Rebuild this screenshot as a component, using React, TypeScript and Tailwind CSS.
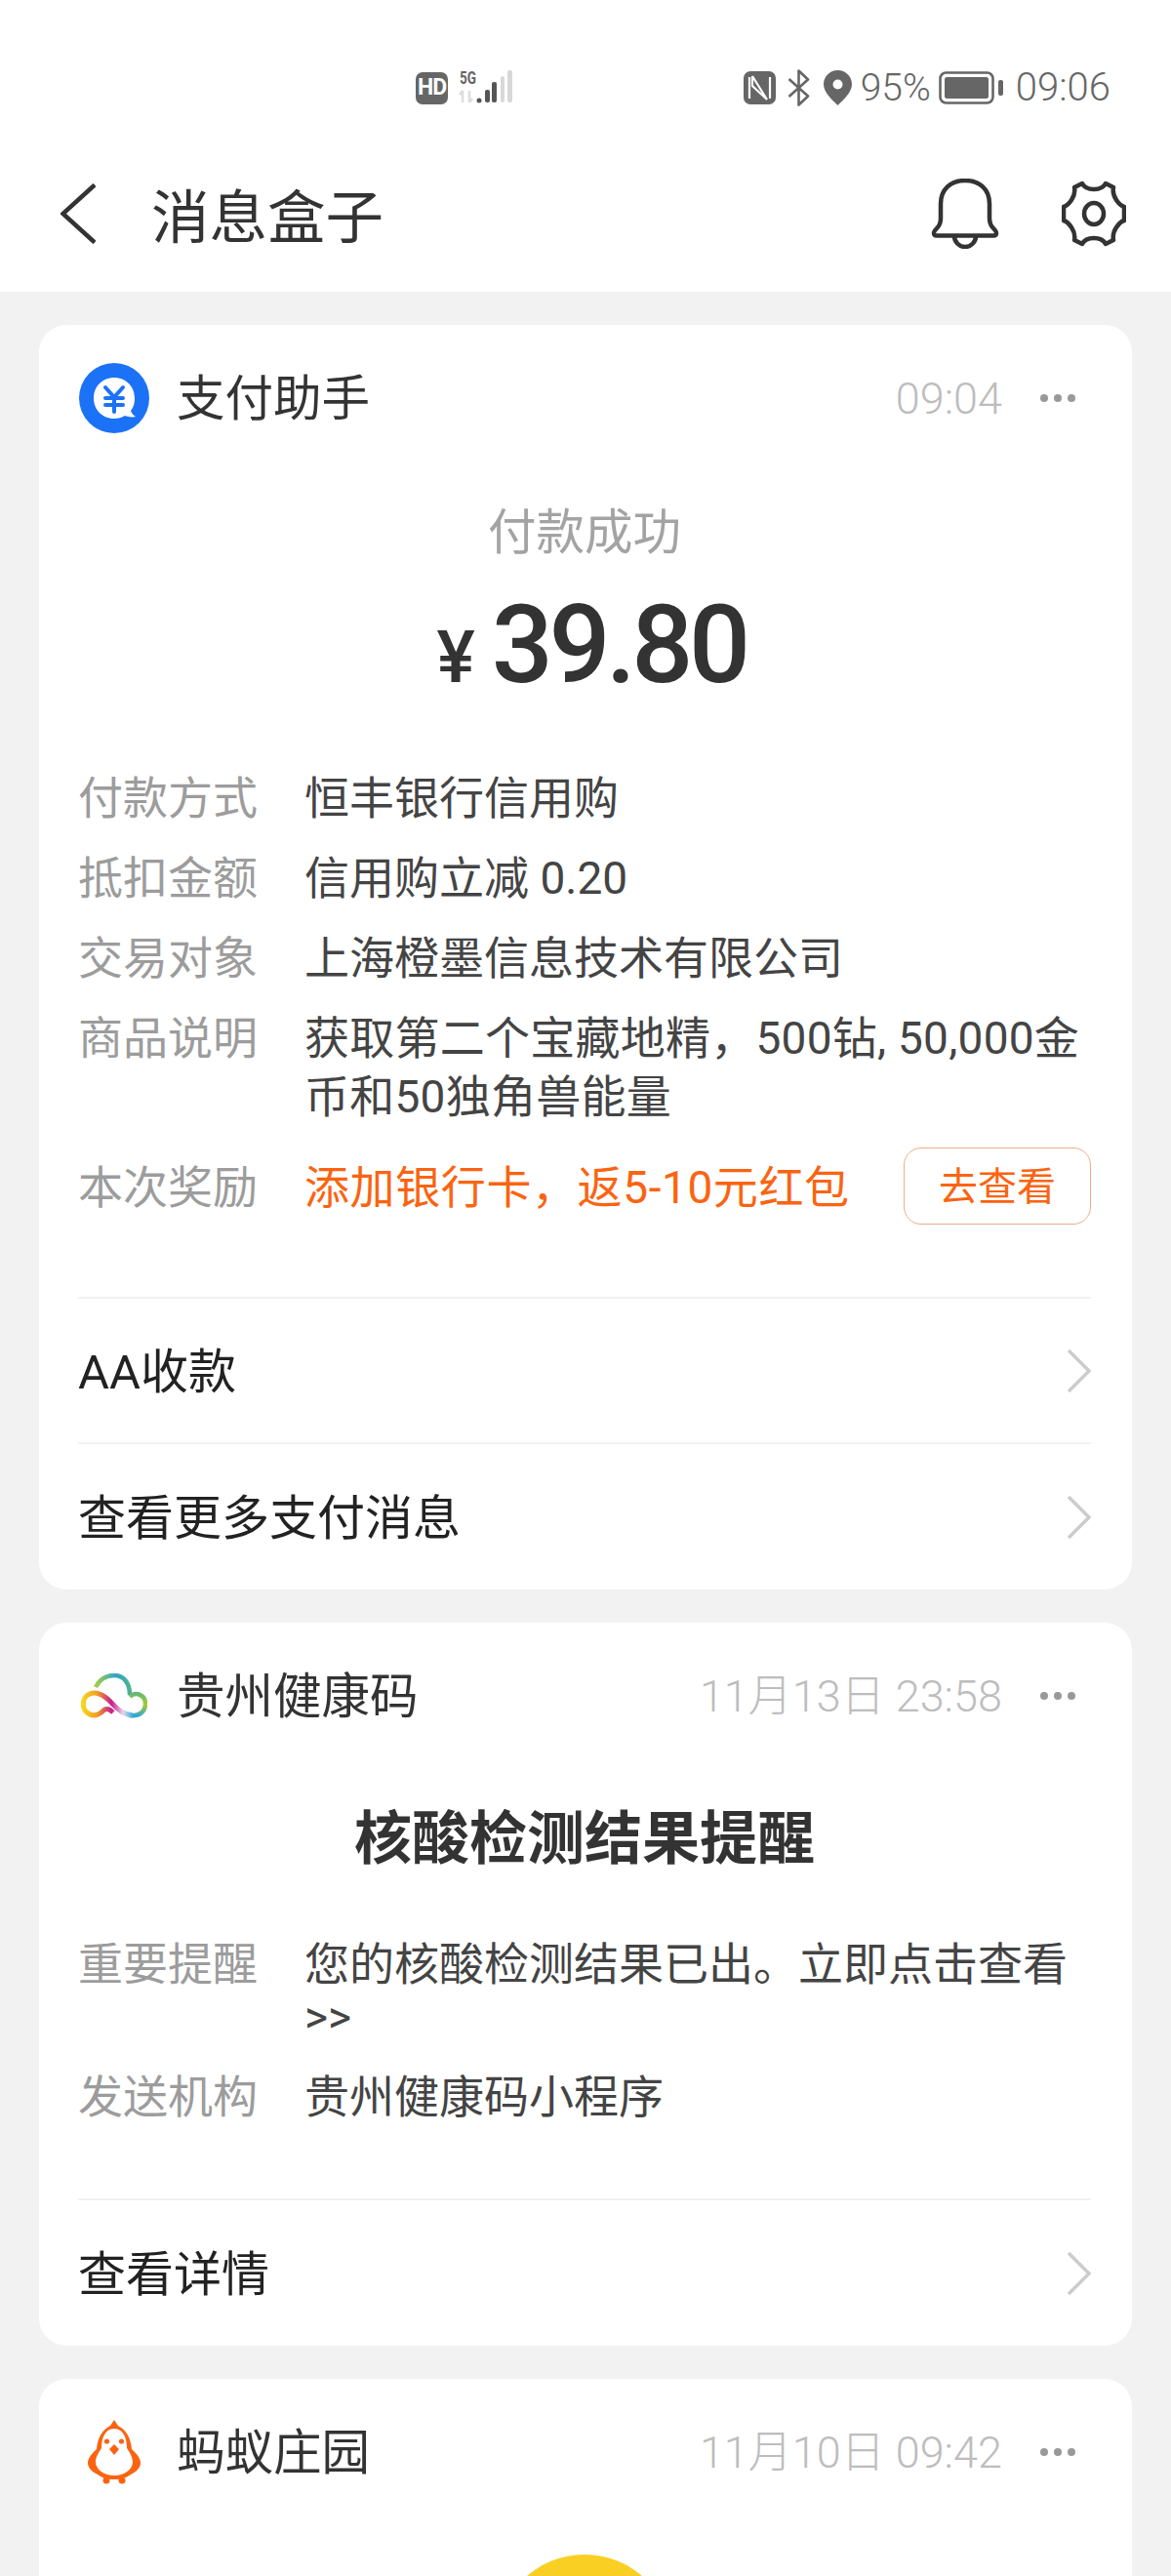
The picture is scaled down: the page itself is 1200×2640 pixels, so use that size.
const FONT = "font-['Roboto','Noto_Sans_CJK_SC',sans-serif]";

function StatusIcons() {
  return (
    <div className="h-[180px] flex items-center pl-[426px] pr-[62px] text-[#666]">
      {/* HD badge */}
      <div className="w-[33px] h-[33px] rounded-[7px] bg-[#666] text-white text-[23px] font-bold flex items-center justify-center tracking-[-1px] font-['Roboto',sans-serif]">
        HD
      </div>
      {/* 5G + signal */}
      <svg width="55" height="36" viewBox="0 0 55 36" className="ml-[11px] overflow-visible">
        <text x="1" y="14" fontSize="18" fontWeight="700" fill="#666" fontFamily="Roboto, sans-serif" textLength="17" lengthAdjust="spacingAndGlyphs">5G</text>
        <path d="M4 33V21M4 21l-3 4M11 21v12M11 33l3-4" stroke="#ddd" strokeWidth="2.500" fill="none" />
        <circle cx="21" cy="31" r="2.500" fill="#555" />
        <rect x="27" y="20" width="5" height="13" rx="2" fill="#555" />
        <rect x="34" y="12" width="5" height="21" rx="2" fill="#555" />
        <rect x="43" y="6" width="4" height="27" rx="2" fill="#d8d8d8" />
        <rect x="50" y="0" width="5" height="33" rx="2" fill="#d8d8d8" />
      </svg>
      <div className="ml-auto flex items-center">
        {/* NFC */}
        <svg width="33" height="34" viewBox="0 0 33 34">
          <rect width="33" height="34" rx="7" fill="#666" />
          <path d="M6 6v22M27 6v22M9 5l15 24M9 5v10l15 14" stroke="#fff" strokeWidth="2.200" fill="none" />
        </svg>
        {/* bluetooth */}
        <svg width="23" height="38" viewBox="0 0 23 38" className="ml-[12px]">
          <path d="M1.500 10 L21 27.500 L11.500 36.500 V1.500 L21 10.500 L1.500 28" stroke="#666" strokeWidth="2.600" fill="none" strokeLinejoin="round" />
        </svg>
        {/* location */}
        <svg width="29" height="36" viewBox="0 0 29 36" className="ml-[14px]">
          <path fillRule="evenodd" d="M14.500 0C6.500 0 0 6.400 0 14.300 0 23 9 30.500 14.500 36 20 30.500 29 23 29 14.300 29 6.400 22.500 0 14.500 0Zm0 9.500a5 5 0 1 1 0 10 5 5 0 0 1 0-10Z" fill="#666" />
        </svg>
        <span className="ml-[9px] text-[39px] leading-none font-light font-['Roboto',sans-serif]">95%</span>
        {/* battery */}
        <svg width="66" height="34" viewBox="0 0 66 34" className="ml-[8px]">
          <rect x="1.500" y="1.500" width="54" height="31" rx="6" fill="none" stroke="#666" strokeWidth="2.600" />
          <rect x="6" y="6" width="45" height="22" rx="2.500" fill="#666" />
          <rect x="61" y="9" width="5" height="16" rx="2" fill="#666" />
        </svg>
        <span className="ml-[13px] text-[40px] leading-none font-light font-['Roboto',sans-serif]">09:06</span>
      </div>
    </div>
  );
}

function NavBar() {
  return (
    <div className="h-[119px] pb-[41px] flex items-center text-[#333]">
      <svg width="36" height="62" viewBox="0 0 36 62" className="ml-[62px]">
        <path d="M35 1.500 L2.500 31 L35 60.500" stroke="#333" strokeWidth="4.500" fill="none" />
      </svg>
      <span className="ml-[57px] mt-[10px] text-[59.5px] leading-[78px]">消息盒子</span>
      <div className="ml-auto flex items-center pr-[46px]">
        <svg width="72" height="72" viewBox="0 0 72 72">
          <path d="M4 56c0-2 1-3 3-5 3-3 4-6 4-10V26C11 11 21 2 36 2s25 9 25 24v15c0 4 1 7 4 10 2 2 3 3 3 5 0 1.500-1 2.500-3 2.500H7c-2 0-3-1-3-2.500Z" fill="none" stroke="#333" strokeWidth="4.500" strokeLinejoin="round" />
          <path d="M25 59c0 6 5 11 11 11s11-5 11-11" fill="none" stroke="#333" strokeWidth="4.500" />
        </svg>
        <svg width="66" height="68" viewBox="0 0 66 68" className="ml-[63px]">
          <path d="M21 3c2 4 7 6 12 6s10-2 12-6l8 4c-1 5 1 10 3 13 2 3 5 6 8 7v14c-3 1-6 4-8 7s-4 8-3 13l-8 4c-2-4-7-6-12-6s-10 2-12 6l-8-4c1-5-1-10-3-13s-5-6-8-7V27c3-1 6-4 8-7s4-8 3-13Z" fill="none" stroke="#333" strokeWidth="4.500" strokeLinejoin="round" />
          <ellipse cx="33" cy="34" rx="10" ry="11" fill="none" stroke="#333" strokeWidth="4.500" />
        </svg>
      </div>
    </div>
  );
}

function PayIcon() {
  return (
    <svg width="72" height="72" viewBox="0 0 72 72">
      <circle cx="36" cy="36" r="36" fill="#1c72f6" />
      <path d="M36 15c12 0 21 9 21 21 0 5-1 9-4 13 1 3 3 5 5 6-4 1-8 0-11-1-3 2-7 3-11 3-12 0-21-9-21-21s9-21 21-21Z" fill="#fff" />
      <path d="M27 25l9 10 9-10M27 36h18M27 43h18M36 35v15" stroke="#1c72f6" strokeWidth="4" fill="none" strokeLinecap="round" />
    </svg>
  );
}

function CloudIcon() {
  return (
    <svg width="68" height="46" viewBox="0 0 68 46">
      <defs>
        <linearGradient id="cloudTop" gradientUnits="userSpaceOnUse" x1="15" y1="0" x2="52" y2="0">
          <stop offset="0" stopColor="#a6cf3f" />
          <stop offset="0.55" stopColor="#2fa6c9" />
          <stop offset="1" stopColor="#4fb38a" />
        </linearGradient>
        <linearGradient id="cloudLobe" gradientUnits="userSpaceOnUse" x1="0" y1="18" x2="0" y2="44">
          <stop offset="0" stopColor="#58b583" />
          <stop offset="0.55" stopColor="#a9cc2c" />
          <stop offset="1" stopColor="#2aa7dc" />
        </linearGradient>
        <linearGradient id="cloudBand" gradientUnits="userSpaceOnUse" x1="0" y1="0" x2="54" y2="0">
          <stop offset="0" stopColor="#f5dc1e" />
          <stop offset="0.3" stopColor="#f2a01f" />
          <stop offset="0.58" stopColor="#c91d8c" />
          <stop offset="0.8" stopColor="#e6d9ea" />
          <stop offset="1" stopColor="#2aa7dc" />
        </linearGradient>
      </defs>
      <path d="M15 14C20 4 28 2 34 2 44 2 50 10 50 22" fill="none" stroke="url(#cloudTop)" strokeWidth="4.500" />
      <path d="M50 24C56 18 66 22 66 31 66 39 60 44 50 43" fill="none" stroke="url(#cloudLobe)" strokeWidth="4.500" />
      <path d="M53 43C40 42 34 32 27 26 20 20 12 18 7 22 1 26 1 36 6 40 12 45 18 43 23 38 26 35 30 37 33 40" fill="none" stroke="url(#cloudBand)" strokeWidth="5" />
    </svg>
  );
}

function ChickIcon() {
  return (
    <svg width="60" height="66" viewBox="0 0 60 66">
      <path d="M30 0l4 6c8 4 13 12 14 24 5 5 9 9 9 14 0 5-4 9-10 12-4 3-9 5-17 5s-13-2-17-5C7 53 3 49 3 44c0-5 4-9 9-14 1-12 6-20 14-24Z" fill="#fa6411" />
      <path d="M30 9c9 0 13 9 13 20 3 5 6 9 6 14 0 8-9 14-19 14s-19-6-19-14c0-5 3-9 6-14C17 18 21 9 30 9Z" fill="#fff" />
      <circle cx="22.500" cy="22" r="2.600" fill="#fa6411" />
      <circle cx="37.500" cy="22" r="2.600" fill="#fa6411" />
      <path d="M30 25l5 5-5 6-5-6Z" fill="#fa6411" />
      <circle cx="22" cy="62" r="3.500" fill="#fa6411" />
      <circle cx="38" cy="62" r="3.500" fill="#fa6411" />
    </svg>
  );
}

function CardHeader({ icon, name, time }: { icon: React.ReactNode; name: string; time: string }) {
  return (
    <div className="h-[72px] flex items-center">
      <div className="ml-[1px] w-[72px] h-[72px] flex items-center justify-center shrink-0">{icon}</div>
      <span className="ml-[28px] mt-[2px] text-[49.5px] leading-[72px] text-[#333]">{name}</span>
      <span className="ml-auto mt-[2px] text-[45px] leading-[72px] font-light text-[#bdbdbd]">{time}</span>
      <div className="ml-[39px] mr-[16px] flex gap-[6px]">
        <span className="w-[8px] h-[8px] rounded-full bg-[#999]" />
        <span className="w-[8px] h-[8px] rounded-full bg-[#999]" />
        <span className="w-[8px] h-[8px] rounded-full bg-[#999]" />
      </div>
    </div>
  );
}

function InfoRow({ label, children, tight }: { label: string; children: React.ReactNode; tight?: boolean }) {
  return (
    <div className={tight ? "flex text-[46px] leading-[54px]" : "flex text-[46px] leading-[60px]"}>
      <span className="w-[232px] shrink-0 text-[#9c9c9c]">{label}</span>
      <span className="flex-1 text-[#444]">{children}</span>
    </div>
  );
}

function LinkRow({ text, tall }: { text: string; tall?: boolean }) {
  return (
    <div className={tall ? "h-[151px] flex items-center justify-between border-t-2 border-[#f2f2f2]" : "h-[149px] flex items-center justify-between border-t-2 border-[#f2f2f2]"}>
      <span className="text-[49px] mt-[4px] text-[#222]">{text}</span>
      <svg width="25" height="46" viewBox="0 0 25 46">
        <path d="M2 2 L23 23 L2 44" stroke="#ccc" strokeWidth="3.500" fill="none" />
      </svg>
    </div>
  );
}

export default function App() {
  return (
    <div className={`w-[1200px] h-[2640px] overflow-hidden bg-[#f2f2f2] ${FONT}`}>
      <div className="bg-white">
        <StatusIcons />
        <NavBar />
      </div>

      <div className="px-[40px] pt-[34px] flex flex-col gap-[34px]">
        {/* 支付助手 */}
        <div className="bg-white rounded-[28px] pl-[40px] pr-[42px] pt-[39px]">
          <CardHeader icon={<PayIcon />} name="支付助手" time="09:04" />
          <div className="mt-[72px] text-center text-[49.5px] leading-[60px] text-[#a3a3a3]">付款成功</div>
          <div className="mt-[30px] ml-[14px] h-[110px] flex items-center justify-center text-[#333]">
            <span className="text-[74px] font-medium mr-[17px] mt-[24px]">¥</span>
            <span className="text-[111px] leading-[110px] font-medium tracking-[-4.5px]">39.80</span>
          </div>
          <div className="mt-[72px] flex flex-col gap-[22px]">
            <InfoRow label="付款方式">恒丰银行信用购</InfoRow>
            <InfoRow label="抵扣金额">信用购立减 0.20</InfoRow>
            <InfoRow label="交易对象">上海橙墨信息技术有限公司</InfoRow>
            <InfoRow label="商品说明">
              <span className="tracking-[0.25px]">获取第二个宝藏地精，500钻, 50,000金币和50独角兽能量</span>
            </InfoRow>
            <div className="flex items-center h-[79px] text-[46px]">
              <span className="w-[232px] mt-[3px] shrink-0 text-[#9c9c9c]">本次奖励</span>
              <span className="mt-[3px] tracking-[0.6px] text-[#fa6411]">添加银行卡，返5-10元红包</span>
              <button className="ml-auto w-[192px] h-[79px] pt-[3px] rounded-[18px] border border-[#f0ab88] text-[40px] text-[#fa6411]">去查看</button>
            </div>
          </div>
          <div className="mt-[74px]">
            <LinkRow text="AA收款" />
            <LinkRow text="查看更多支付消息" tall />
          </div>
        </div>

        {/* 贵州健康码 */}
        <div className="bg-white rounded-[28px] pl-[40px] pr-[42px] pt-[39px]">
          <CardHeader icon={<CloudIcon />} name="贵州健康码" time="11月13日 23:58" />
          <div className="mt-[76px] text-center text-[59px] leading-[70px] font-bold text-[#333]">核酸检测结果提醒</div>
          <div className="mt-[66px] flex flex-col gap-[25px]">
            <InfoRow label="重要提醒" tight>您的核酸检测结果已出。立即点击查看&gt;&gt;</InfoRow>
            <InfoRow label="发送机构">贵州健康码小程序</InfoRow>
          </div>
          <div className="mt-[74px]">
            <LinkRow text="查看详情" tall />
          </div>
        </div>

        {/* 蚂蚁庄园 */}
        <div className="bg-white rounded-t-[28px] pl-[40px] pr-[42px] pt-[39px] pb-[40px]">
          <CardHeader icon={<ChickIcon />} name="蚂蚁庄园" time="11月10日 09:42" />
          <div className="mt-[69px] mx-auto w-[180px] h-[180px] rounded-full bg-[#f9cf24]" />
        </div>
      </div>
    </div>
  );
}
